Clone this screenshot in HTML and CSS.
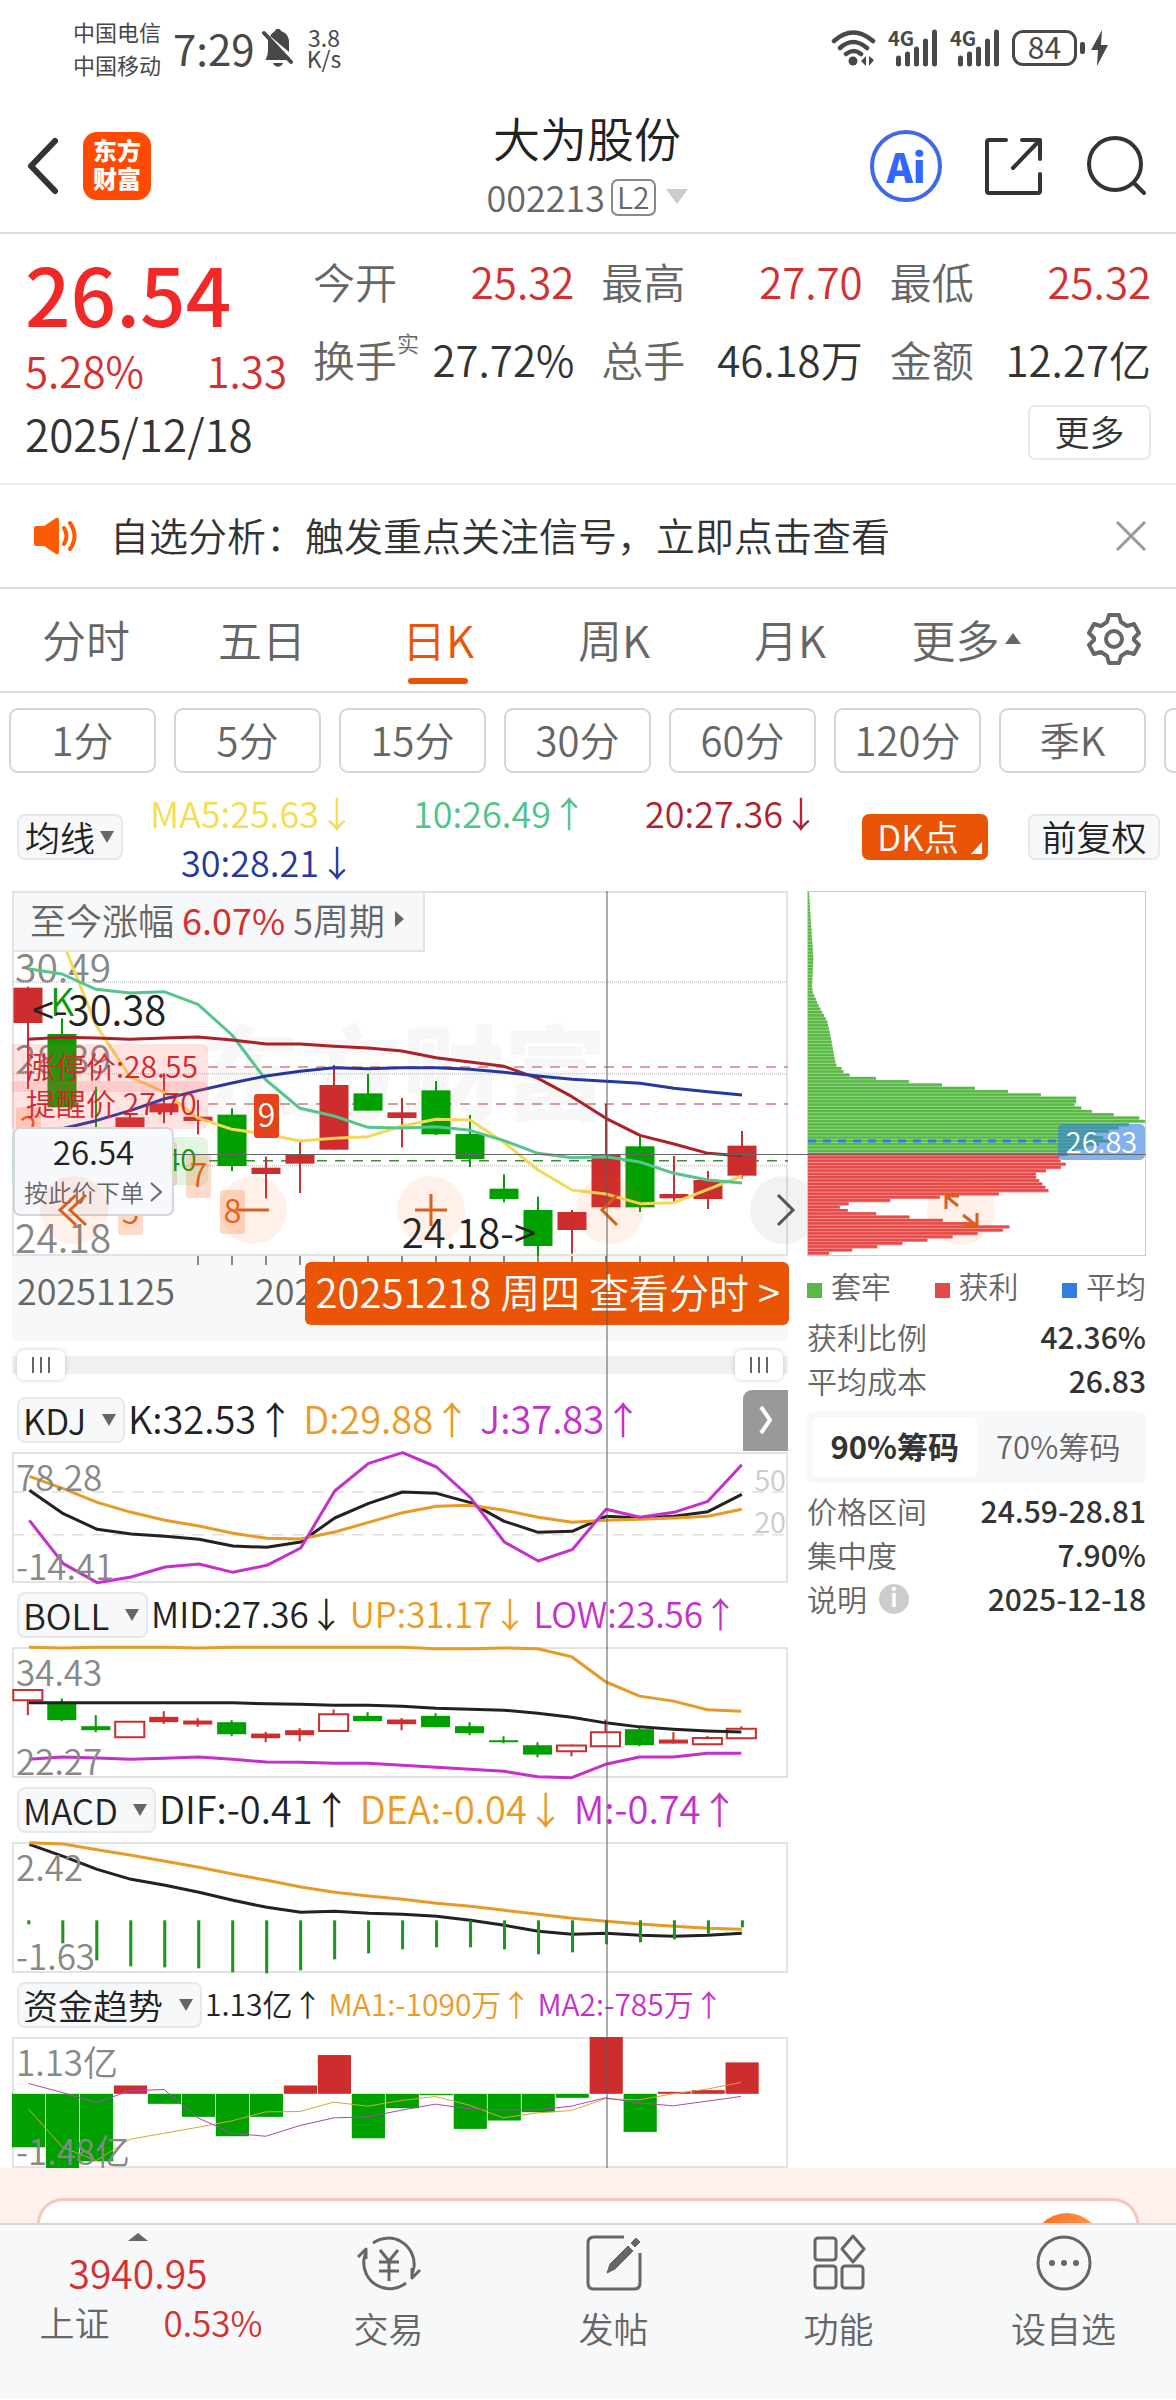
FILE: index.html
```
<!DOCTYPE html>
<html lang="zh-CN">
<head>
    <meta charset="UTF-8">
    <meta name="viewport" content="width=device-width, initial-scale=1.0">
    <title>大为股份 002213</title>
    <link rel="stylesheet" href="styles.css">
</head>
<body>

<div class="status-bar">
    <div class="carriers"><span>中国电信</span><span>中国移动</span></div>
    <span class="clock">7:29</span>
    <svg class="mute" viewBox="0 0 32 40"><path d="M5 31c1-3 2-5 2-9V10l22 20v2H4zM9 8c2-3 4-4 5-5 1-3 5-3 6 0 5 2 8 5 8 11v10zM12 35h10c-2 5-8 5-10 0z" fill="#484848"/><path d="M3 5l27 29" stroke="#484848" stroke-width="4" stroke-linecap="round"/></svg>
    <div class="speed"><span>3.8</span><span>K/s</span></div>
    <div class="signals">
        <svg class="wifi" viewBox="0 0 46 40" fill="none" stroke="#484848" stroke-width="4.5" stroke-linecap="round"><path d="M3 13q19-17 39 0M9 20q13-12 27 0M15 26q8-6 15 0"/><circle cx="22" cy="33" r="4.5" fill="#484848" stroke="none"/><path d="M35 28v10l-5-5zM38 28v10l5-6z" fill="#484848" stroke="none"/></svg>
        <div class="signal"><span>4G</span><svg viewBox="0 0 50 38" stroke="#484848" stroke-width="5" stroke-linecap="round"><path d="M10 29v6M19 25v10M28 20v15M37 12v23M46 3v32"/></svg></div>
        <div class="signal"><span>4G</span><svg viewBox="0 0 50 38" stroke="#484848" stroke-width="5" stroke-linecap="round"><path d="M10 29v6M19 25v10M28 20v15M37 12v23M46 3v32"/></svg></div>
        <div class="battery">84</div>
        <svg class="bolt" viewBox="0 0 28 36" fill="#484848"><rect x="0" y="12" width="5" height="12" rx="2"/><path d="M22 0L11 20h7l-1 16 11-21h-7z"/></svg>
    </div>
</div>

<header class="header">
    <div class="header-left">
        <button class="icon-btn" aria-label="返回"><svg width="34" height="58" viewBox="0 0 34 58" fill="none" stroke="#333" stroke-width="6" stroke-linecap="round" stroke-linejoin="round"><path d="M29 4L5 29l24 25"/></svg></button>
        <div class="logo">东方<br>财富</div>
    </div>
    <div class="header-title">
        <h1>大为股份</h1>
        <div class="code">002213<span class="level">L2</span><i class="caret"></i></div>
    </div>
    <div class="header-right">
        <button class="ai" aria-label="Ai"><span>Ai</span></button>
        <button class="icon-btn" aria-label="分享"><svg width="60" height="60" viewBox="0 0 60 60" fill="none" stroke="#333" stroke-width="4" stroke-linecap="round" stroke-linejoin="round"><path d="M22 4H5q-2 0-2 2v49q0 2 2 2h49q2 0 2-2V38M56 23V4H38M55 5L29 32"/></svg></button>
        <button class="icon-btn" aria-label="搜索"><svg width="62" height="62" viewBox="0 0 62 62" fill="none" stroke="#333" stroke-width="4" stroke-linecap="round"><circle cx="29" cy="29" r="26"/><path d="M48 48l10 10"/></svg></button>
    </div>
</header>

<section class="quote">
    <div class="quote-top">
        <div>
            <div class="price">26.54</div>
            <div class="change"><span>5.28%</span><span>1.33</span></div>
        </div>
        <dl class="stats">
            <div><dt>今开</dt><dd class="up">25.32</dd></div>
            <div><dt>最高</dt><dd class="up">27.70</dd></div>
            <div><dt>最低</dt><dd class="up">25.32</dd></div>
            <div><dt>换手<sup>实</sup></dt><dd>27.72%</dd></div>
            <div><dt>总手</dt><dd>46.18万</dd></div>
            <div><dt>金额</dt><dd>12.27亿</dd></div>
        </dl>
    </div>
    <div class="quote-bottom">
        <span>2025/12/18</span>
        <button class="more">更多</button>
    </div>
</section>

<div class="notice">
    <svg width="46" height="38" viewBox="0 0 46 38"><path d="M1 11q0-2 2-2h8L23 1q3-1 3 2v32q0 3-3 2l-12-8H3q-2 0-2-2z" fill="#ff5a00"/><path d="M31 11q5 8 0 16M37 6q9 13 0 26" fill="none" stroke="#ff5a00" stroke-width="4" stroke-linecap="round"/></svg>
    <p>自选分析：触发重点关注信号，立即点击查看</p>
    <button class="icon-btn" aria-label="关闭"><svg width="30" height="30" viewBox="0 0 30 30" stroke="#999" stroke-width="3"><path d="M1 1l28 28M29 1L1 29"/></svg></button>
</div>

<nav class="tabs">
    <button>分时</button>
    <button>五日</button>
    <button class="active">日K</button>
    <button>周K</button>
    <button>月K</button>
    <button>更多<i class="caret-up"></i></button>
    <button class="gear" aria-label="设置"><svg width="54" height="54" viewBox="0 0 54 54" fill="none" stroke="#666" stroke-width="4" stroke-linejoin="round"><path d="M22 3h10l2 7 6 4 7-2 5 9-5 5v2l5 5-5 9-7-2-6 4-2 7H22l-2-7-6-4-7 2-5-9 5-5v-2l-5-5 5-9 7 2 6-4z"/><circle cx="27" cy="27" r="8"/></svg></button>
</nav>

<div class="periods">
    <button>1分</button>
    <button>5分</button>
    <button>15分</button>
    <button>30分</button>
    <button>60分</button>
    <button>120分</button>
    <button>季K</button>
    <button aria-label="年K"></button>
</div>

<div class="averages">
    <div class="picker tight"><select aria-label="均线"><option>均线</option></select></div>
    <div class="ma-values">
        <span class="ma5">MA5:25.63↓</span>
        <span class="ma10">10:26.49↑</span>
        <span class="ma20">20:27.36↓</span>
        <span class="ma30">30:28.21↓</span>
    </div>
    <button class="dk">DK点</button>
    <button class="adjust">前复权</button>
</div>

<main class="charts">
    <div class="left-col">
        <div class="kline">
            <div class="watermark">东方财富</div>
            <span class="scale s1">30.49</span>
            <span class="scale s2">28.39</span>
            <span class="scale s3">24.18</span>
            <svg id="kline" class="plot" viewBox="36 33 2328 1095" preserveAspectRatio="none"></svg>
            <span class="mark-k">K</span>
            <span class="extreme high">&lt;-30.38</span>
            <span class="extreme low">24.18-&gt;</span>
            <span class="seq n2">2</span>
            <span class="seq n5">5</span>
            <span class="seq n6">6</span>
            <span class="alert limit">涨停价:28.55</span>
            <span class="alert remind">提醒价 27.70</span>
            <span class="alert floor">提醒价 26.40</span>
            <span class="seq n7">7</span>
            <span class="seq n8">8</span>
            <span class="seq n9">9</span>
            <button class="gain">至今涨幅 <b>6.07%</b> 5周期<i></i></button>
            <button class="order"><strong>26.54</strong><span>按此价下单<svg width="14" height="22" viewBox="0 0 14 22" fill="none" stroke="#666" stroke-width="2"><path d="M2 2l10 9-10 9"/></svg></span></button>
            <button class="round r1" aria-label="最左"><svg viewBox="0 0 68 68"><path d="M36 19L20 34l16 15M46 19L30 34l16 15"/></svg></button>
            <button class="round r2" aria-label="缩小"><svg viewBox="0 0 68 68"><path d="M18 34h32"/></svg></button>
            <button class="round r3" aria-label="放大"><svg viewBox="0 0 68 68"><path d="M18 34h32M34 18v32"/></svg></button>
            <button class="round r4" aria-label="左移"><svg viewBox="0 0 68 68"><path d="M41 19L26 34l15 15"/></svg></button>
            <button class="round r5" aria-label="右移"><svg viewBox="0 0 68 68"><path d="M28 19l15 15-15 15"/></svg></button>
        </div>
        <div class="axis">
            <svg id="ticks" viewBox="0 0 776 10" preserveAspectRatio="none"></svg>
            <span>20251125</span>
            <span class="mid-date">202</span>
            <button class="date-tip">20251218 周四 查看分时 &gt;</button>
        </div>
        <div class="range">
            <input type="range" aria-label="起点" min="0" max="100" value="0">
            <input type="range" aria-label="终点" min="0" max="100" value="100">
        </div>

        <div class="ind-head">
            <div class="picker"><select aria-label="指标一"><option>KDJ</option></select></div>
            <p class="wide"><span>K:32.53↑</span><span class="orange">D:29.88↑</span><span class="purple">J:37.83↑</span></p>
            <button class="next" aria-label="展开"><svg width="14" height="30" viewBox="0 0 14 30" fill="none" stroke="#fff" stroke-width="4"><path d="M2 2l9 13-9 13"/></svg></button>
        </div>
        <div class="panel">
            <svg id="kdj" class="plot" viewBox="24 215 1521 393" preserveAspectRatio="none"></svg>
            <span class="top">78.28</span><span class="bottom">-14.41</span>
            <span class="level50">50</span><span class="level20">20</span>
        </div>

        <div class="ind-head">
            <div class="picker"><select aria-label="指标二"><option>BOLL</option></select></div>
            <p><span>MID:27.36↓</span><span class="orange">UP:31.17↓</span><span class="purple">LOW:23.56↑</span></p>
        </div>
        <div class="panel">
            <svg id="boll" class="plot" viewBox="24 801 1521 392" preserveAspectRatio="none"></svg>
            <span class="top">34.43</span><span class="bottom">22.27</span>
        </div>

        <div class="ind-head">
            <div class="picker"><select aria-label="指标三"><option>MACD</option></select></div>
            <p class="wide"><span>DIF:-0.41↑</span><span class="orange">DEA:-0.04↓</span><span class="purple">M:-0.74↑</span></p>
        </div>
        <div class="panel">
            <svg id="macd" class="plot" viewBox="24 215 1521 393" preserveAspectRatio="none"></svg>
            <span class="top">2.42</span><span class="bottom">-1.63</span>
        </div>

        <div class="ind-head">
            <div class="picker"><select aria-label="指标四"><option>资金趋势</option></select></div>
            <p class="small"><span>1.13亿↑</span><span class="orange">MA1:-1090万↑</span><span class="purple">MA2:-785万↑</span></p>
        </div>
        <div class="panel">
            <svg id="funds" class="plot" viewBox="24 801 1521 392" preserveAspectRatio="none"></svg>
            <span class="top">1.13亿</span><span class="bottom">-1.48亿</span>
        </div>
        <div class="cross-v"></div>
    </div>

    <aside class="chips">
        <div class="chips-plot">
            <svg id="chips" class="plot" viewBox="50 24 1018 752" preserveAspectRatio="none"></svg>
            <span class="cost">26.83</span>
            <button class="round expand" aria-label="展开"><svg viewBox="0 0 68 68"><path d="M19 32V19h13M19 19l12 10M36 38l14 11M50 36v13H36"/></svg></button>
        </div>
        <ul class="legend"><li class="g">套牢</li><li class="r">获利</li><li class="b">平均</li></ul>
        <dl>
            <div><dt>获利比例</dt><dd>42.36%</dd></div>
            <div><dt>平均成本</dt><dd>26.83</dd></div>
        </dl>
        <div class="segment"><button class="active">90%筹码</button><button>70%筹码</button></div>
        <dl>
            <div><dt>价格区间</dt><dd>24.59-28.81</dd></div>
            <div><dt>集中度</dt><dd>7.90%</dd></div>
            <div><dt>说明<i class="info">i</i></dt><dd>2025-12-18</dd></div>
        </dl>
    </aside>
    <div class="cross-h"></div>
</main>

<div class="promo"><div class="promo-card"><i></i></div></div>

<footer class="toolbar">
    <button class="index">
        <i class="caret-up"></i>
        <span class="up">3940.95</span>
        <span class="index-row"><span>上证</span><span class="up">0.53%</span></span>
    </button>
    <button><svg viewBox="0 0 66 60"><path d="M17 10A26 26 0 0 1 58 34q-1 4-2 7M50 50A26 26 0 0 1 8 26q1-4 2-8M2 24l8-8v10M64 37l-8 8V35"/><path d="M24 17l9 11 9-11M33 28v20M23 29h20M23 38h20"/></svg>交易</button>
    <button><svg viewBox="0 0 66 60"><path d="M43 4H13q-6 0-6 6v40q0 6 6 6h40q6 0 6-6V20"/><path d="M26 40l3-9 18-18 5 5-18 18zM50 10l5-5 4 4-5 5z" fill="#666" stroke-width="1"/></svg>发帖</button>
    <button><svg viewBox="0 0 66 60"><rect x="9" y="5" width="21" height="22" rx="3"/><rect x="9" y="33" width="21" height="22" rx="3"/><rect x="36" y="33" width="21" height="22" rx="3"/><path d="M47 3l11 13-11 13-11-13z"/></svg>功能</button>
    <button><svg viewBox="0 0 66 60"><circle cx="33" cy="30" r="26"/><g fill="#666" stroke="none"><circle cx="21" cy="30" r="3"/><circle cx="33" cy="30" r="3"/><circle cx="45" cy="30" r="3"/></g></svg>设自选</button>
</footer>

<script src="charts.js"></script>
</body>
</html>
```

FILE: styles.css
```
* {
    box-sizing: border-box;
}
body {
    margin: 0;
    background: #fff;
    color: #333;
    font-family: "Noto Sans CJK SC", Roboto, sans-serif;
    font-weight: 350;
    font-size: 38px;
    line-height: 1;
}
button, select {
    font: inherit;
    color: inherit;
    border: 0;
    background: none;
    padding: 0;
    margin: 0;
}
h1, p, dl, dd, ul {
    margin: 0;
    padding: 0;
    font-weight: inherit;
}
svg {
    display: block;
}
i {
    font-style: normal;
}
.up {
    color: #d5302f;
}
.orange {
    color: #ec9a26;
}
.purple {
    color: #c52fcb;
}
.icon-btn {
    display: flex;
}

/* status bar */
.status-bar {
    display: flex;
    align-items: center;
    height: 98px;
    padding: 0 68px 2px 73px;
    color: #484848;
    font-weight: 400;
}
.carriers {
    display: flex;
    flex-direction: column;
    font-size: 22px;
    line-height: 33px;
    margin-right: 12px;
}
.clock {
    font-size: 42px;
    margin-right: 6px;
}
.mute {
    width: 32px;
    height: 40px;
    margin-right: 14px;
}
.speed {
    display: flex;
    flex-direction: column;
    align-items: center;
    font-size: 23px;
    line-height: 21px;
}
.signals {
    display: flex;
    align-items: center;
    gap: 11px;
    margin-left: auto;
}
.wifi {
    width: 46px;
    height: 40px;
}
.signal {
    display: grid;
}
.signal span, .signal svg {
    grid-area: 1 / 1;
}
.signal span {
    font-size: 20px;
    line-height: 18px;
    font-weight: 700;
}
.signal svg {
    width: 51px;
    height: 38px;
}
.battery {
    width: 65px;
    height: 36px;
    margin-right: -8px;
    border: 3px solid #484848;
    border-radius: 11px;
    text-align: center;
    font-size: 30px;
    line-height: 27px;
}
.bolt {
    width: 28px;
    height: 36px;
}

/* title bar */
.header {
    display: grid;
    grid-template-columns: 1fr auto 1fr;
    align-items: center;
    height: 136px;
    padding: 2px 28px 0 26px;
    border-bottom: 2px solid #ddd;
}
.header-left, .header-right {
    display: flex;
    align-items: center;
}
.header-left {
    gap: 23px;
}
.header-right {
    justify-content: flex-end;
    gap: 42px;
}
.logo {
    width: 68px;
    height: 68px;
    padding-top: 4px;
    border-radius: 14px;
    background: #ff4a00;
    color: #fff;
    font-size: 24px;
    font-weight: 900;
    line-height: 28px;
    text-align: center;
}
.header-title {
    text-align: center;
}
.header-title h1 {
    font-size: 47px;
    line-height: 60px;
    color: #222;
}
.code {
    display: flex;
    align-items: center;
    justify-content: center;
    height: 58px;
    font-size: 36px;
    color: #666;
}
.level {
    margin: 2px 10px 0 6px;
    height: 37px;
    padding: 0 4px;
    border: 2px solid #888;
    border-radius: 7px;
    font-size: 30px;
    line-height: 30px;
}
.caret {
    border: 11px solid transparent;
    border-top: 15px solid #ccc;
    border-bottom: 0;
}
.ai {
    width: 72px;
    height: 72px;
    border: 4px solid #4068e8;
    border-radius: 50%;
    color: #3366ff;
    font-size: 40px;
    font-weight: 900;
    line-height: 50px;
}

/* quote */
.quote {
    padding: 10px 25px 23px;
    border-bottom: 2px solid #eee;
}
.quote-top {
    display: grid;
    grid-template-columns: 262px 1fr;
    gap: 26px;
    height: 156px;
}
.price {
    color: #f02828;
    font-size: 80px;
    font-weight: 500;
    line-height: 96px;
}
.change {
    display: flex;
    justify-content: space-between;
    color: #d5302f;
    font-size: 42px;
    line-height: 60px;
}
.stats {
    display: grid;
    grid-template-columns: 1fr 1fr 1fr;
    column-gap: 27px;
    font-size: 42px;
    line-height: 74px;
}
.stats div {
    display: flex;
    justify-content: space-between;
    height: 74px;
    white-space: nowrap;
}
.stats dt {
    display: flex;
    color: #666;
}
.stats sup {
    font-size: 22px;
    line-height: 40px;
}
.quote-bottom {
    display: flex;
    align-items: center;
    justify-content: space-between;
    margin-top: 5px;
    font-size: 44px;
}
.more {
    width: 123px;
    height: 55px;
    padding-bottom: 5px;
    border: 2px solid #e8e8e8;
    border-radius: 7px;
    font-size: 35px;
}

/* notice */
.notice {
    display: flex;
    align-items: center;
    height: 104px;
    padding: 0 30px 0 33px;
    border-bottom: 2px solid #ddd;
}
.notice p {
    flex: 1;
    margin-left: 31px;
    padding-bottom: 4px;
    font-size: 39px;
}

/* tabs */
.tabs {
    display: grid;
    grid-template-columns: repeat(6, 176fr) 120fr;
    height: 104px;
    border-bottom: 2px solid #ddd;
    color: #666;
    font-size: 44px;
}
.tabs button {
    display: flex;
    align-items: center;
    justify-content: center;
    padding: 0 4px 3px 0;
}
.tabs .active {
    position: relative;
    color: #e95504;
}
.tabs .active::after {
    content: "";
    position: absolute;
    bottom: 7px;
    width: 60px;
    height: 6px;
    border-radius: 3px;
    background: #e95504;
}
.caret-up {
    margin-left: 5px;
    border: 8px solid transparent;
    border-top: 0;
    border-bottom: 11px solid #666;
}
.periods {
    display: flex;
    gap: 18px;
    padding: 15px 0 0 9px;
    overflow: hidden;
    color: #666;
    font-size: 40px;
}
.periods button {
    flex: 0 0 147px;
    height: 65px;
    padding-bottom: 4px;
    border: 2px solid #d5d5d5;
    border-radius: 9px;
}

/* moving averages */
.averages {
    display: flex;
    align-items: center;
    padding: 15px 16px 5px 17px;
}
.picker {
    position: relative;
    color: #222;
    font-size: 35px;
}
.picker select {
    appearance: none;
    display: block;
    height: 46px;
    padding: 0 36px 2px 4px;
    border: 2px solid #e6e8eb;
    border-radius: 8px;
    background: #f7f8fa;
}
.picker::after {
    content: "";
    position: absolute;
    right: 9px;
    top: 17px;
    border: 7px solid transparent;
    border-top: 12px solid #666;
    border-bottom: 0;
    pointer-events: none;
}
.tight select {
    padding: 0 25px 2px 6px;
}
.ma-values {
    flex: 1;
    display: grid;
    grid-template-columns: 1fr 1fr 1fr;
    text-align: right;
    font-size: 36px;
    line-height: 49px;
}
.ma5 {
    color: #f6dc50;
}
.ma10 {
    color: #4fc48a;
}
.ma20 {
    color: #b01f2c;
}
.ma30 {
    color: #2438a0;
}
.dk, .adjust {
    height: 46px;
    padding-bottom: 4px;
    border-radius: 7px;
    font-size: 35px;
}
.dk {
    position: relative;
    width: 126px;
    margin: 0 40px 0 43px;
    padding-right: 14px;
    background: #e95504;
    color: #fff;
}
.dk::after {
    content: "";
    position: absolute;
    right: 6px;
    bottom: 6px;
    border-left: 11px solid transparent;
    border-bottom: 12px solid #fff;
}
.adjust {
    width: 132px;
    border: 2px solid #e6e8eb;
    background: #f7f8fa;
    color: #222;
}

/* charts */
.charts {
    position: relative;
    display: grid;
    grid-template-columns: minmax(0, 776fr) minmax(0, 339fr);
    gap: 19px;
    padding: 0 30px 0 12px;
}
.left-col {
    position: relative;
}
.plot {
    position: absolute;
    inset: 0;
    width: 100%;
    height: 100%;
    overflow: visible;
}
.kline, .panel {
    position: relative;
    box-shadow: inset 0 0 0 2px #e3e3e3;
}
.kline {
    height: 365px;
}
.kline > span, .kline > button {
    position: absolute;
}
.watermark {
    position: absolute;
    left: 24%;
    top: 126px;
    color: #f7f7f7;
    font-size: 102px;
    font-weight: 900;
}
.scale {
    left: 3px;
    color: #888;
    font-size: 39px;
}
.s1 {
    top: 56px;
}
.s2 {
    top: 147px;
}
.s3 {
    top: 326px;
}
.mark-k {
    left: 38px;
    top: 90px;
    color: #0a9a0a;
}
.extreme {
    color: #222;
    font-size: 40px;
}
.high {
    left: 20px;
    top: 97px;
}
.low {
    right: 252px;
    top: 320px;
}
.seq {
    width: 25px;
    height: 44px;
    border-radius: 3px;
    background: rgba(250, 110, 40, .25);
    color: #e0601c;
    font-size: 32px;
    line-height: 38px;
    text-align: center;
}
.n2 {
    left: 4px;
    top: 216px;
}
.n5 {
    left: 106px;
    top: 300px;
}
.n6 {
    left: 140px;
    top: 251px;
}
.n7 {
    left: 174px;
    top: 263px;
}
.n8 {
    left: 208px;
    top: 299px;
}
.n9 {
    left: 242px;
    top: 203px;
    background: #e2431a;
    color: #fff;
}
.alert {
    left: 0;
    width: 196px;
    height: 48px;
    padding-left: 14px;
    border-radius: 0 6px 6px 0;
    background: rgba(255, 80, 80, .16);
    color: #d8262c;
    font-size: 30px;
    line-height: 42px;
    white-space: nowrap;
}
.limit {
    top: 153px;
}
.remind {
    top: 190px;
}
.floor {
    top: 246px;
    background: rgba(60, 180, 60, .15);
    color: #0a9a0a;
}
.gain {
    display: flex;
    align-items: center;
    left: 0;
    top: 0;
    width: 413px;
    height: 61px;
    padding: 0 0 5px 16px;
    border: 2px solid #e3e3e3;
    background: #f7f8fa;
    color: #666;
    font-size: 36px;
    white-space: pre;
}
.gain b {
    color: #d5302f;
    font-weight: 400;
}
.gain i {
    margin-left: 10px;
    border: 8px solid transparent;
    border-left: 9px solid #666;
    border-right: 0;
}
.order {
    display: flex;
    flex-direction: column;
    align-items: center;
    left: 1px;
    top: 236px;
    width: 161px;
    height: 89px;
    border: 2px solid #d3d6da;
    border-radius: 7px;
    background: #f6f8fb;
    color: #666;
    font-size: 24px;
    line-height: 38px;
}
.order strong {
    color: #222;
    font-size: 33px;
    font-weight: 350;
    line-height: 44px;
}
.order span {
    display: flex;
    align-items: center;
    gap: 5px;
    white-space: nowrap;
}
.round {
    position: absolute;
    top: 285px;
    width: 68px;
    height: 68px;
    margin-left: -34px;
    border-radius: 50%;
    background: rgba(255, 90, 20, .09);
}
.round svg {
    fill: none;
    stroke: #d8601c;
    stroke-width: 3;
}
.r1 {
    left: 8%;
}
.r2 {
    left: 31%;
}
.r3 {
    left: 54%;
}
.r4 {
    left: 77%;
}
.r5 {
    left: 99%;
    margin-left: -30px;
    background: rgba(0, 0, 0, .05);
}
.r5 svg {
    stroke: #555;
}
.axis {
    position: relative;
    height: 85px;
    padding: 15px 5px;
    background: #f7f8fa;
    color: #666;
    font-size: 36px;
}
.axis svg {
    position: absolute;
    left: 0;
    top: 0;
    width: 100%;
    height: 10px;
}
.mid-date {
    position: absolute;
    left: 243px;
}
.date-tip {
    position: absolute;
    right: -1px;
    top: 6px;
    height: 63px;
    padding: 0 9px 6px 11px;
    border-radius: 6px;
    background: #e95504;
    color: #fff;
    font-size: 40px;
    white-space: nowrap;
}
.range {
    display: grid;
    align-items: center;
    height: 30px;
    margin: 9px 0 8px;
    padding: 0 5px;
    background: linear-gradient(#f1f1f3, #f1f1f3) center / 100% 18px no-repeat;
}
.range input {
    grid-area: 1 / 1;
    appearance: none;
    width: 100%;
    height: 30px;
    margin: 0;
    background: none;
    pointer-events: none;
}
.range input::-webkit-slider-thumb {
    appearance: none;
    width: 48px;
    height: 30px;
    border-radius: 7px;
    background:
        linear-gradient(#666, #666) 15px 7px / 2px 16px no-repeat,
        linear-gradient(#666, #666) 23px 7px / 2px 16px no-repeat,
        linear-gradient(#666, #666) 31px 7px / 2px 16px no-repeat,
        #fff;
    box-shadow: 0 0 5px rgba(0, 0, 0, .2);
    pointer-events: auto;
}

/* indicators */
.ind-head {
    display: flex;
    align-items: center;
    height: 64px;
    padding-left: 5px;
}
.ind-head p {
    flex: 1;
    display: flex;
    gap: 6px;
    margin-left: 3px;
    padding-bottom: 5px;
    color: #222;
    font-size: 35px;
    white-space: nowrap;
}
.ind-head .wide {
    gap: 9px;
    font-size: 38px;
}
.ind-head .small {
    font-size: 30px;
}
.next {
    display: flex;
    align-items: center;
    justify-content: center;
    width: 45px;
    height: 61px;
    border-radius: 9px 0 0 0;
    background: #999;
}
.panel {
    height: 131px;
}
.panel span {
    position: absolute;
    left: 4px;
    color: #888;
    font-size: 35px;
}
.panel .top {
    top: 6px;
}
.panel .bottom {
    bottom: 1px;
}
.panel .level50, .panel .level20 {
    left: auto;
    right: 2px;
    color: #ccc;
    font-size: 29px;
}
.panel .level50 {
    top: 12px;
}
.panel .level20 {
    top: 54px;
}
.cross-v {
    position: absolute;
    left: 76.5%;
    top: 0;
    bottom: 0;
    width: 2px;
    background: rgba(90, 90, 90, .5);
}
.cross-h {
    position: absolute;
    left: 173px;
    right: 30px;
    top: 263px;
    height: 1px;
    background: #666;
}

/* chip distribution */
.chips-plot {
    position: relative;
    height: 365px;
    border: 1px solid #ccc;
}
.cost {
    position: absolute;
    right: 0;
    top: 232px;
    width: 87px;
    height: 36px;
    border-radius: 5px;
    background: rgba(50, 125, 225, .6);
    color: #fff;
    font-size: 29px;
    line-height: 32px;
    text-align: center;
}
.expand {
    left: 45.5%;
    top: 285px;
}
.legend {
    display: flex;
    justify-content: space-between;
    list-style: none;
    color: #666;
    font-size: 30px;
    line-height: 58px;
}
.legend li::before {
    content: "";
    display: inline-block;
    width: 15px;
    height: 15px;
    margin-right: 9px;
}
.g::before {
    background: #5ab946;
}
.r::before {
    background: #e54a4a;
}
.b::before {
    background: #327de1;
}
.chips dl {
    font-size: 30px;
    line-height: 44px;
}
.chips dl div {
    display: flex;
    justify-content: space-between;
}
.chips dt {
    display: flex;
    align-items: center;
    color: #666;
}
.chips dd {
    font-weight: 500;
}
.info {
    width: 30px;
    height: 30px;
    margin: 2px 0 0 12px;
    border-radius: 50%;
    background: #ccc;
    color: #fff;
    font-size: 24px;
    font-weight: 700;
    line-height: 26px;
    text-align: center;
}
.segment {
    display: grid;
    grid-template-columns: 1fr 1fr;
    height: 72px;
    margin: 9px 0 5px;
    padding: 6px;
    border-radius: 6px;
    background: #f7f8fa;
    color: #666;
    font-size: 31px;
}
.segment button {
    padding-bottom: 4px;
}
.segment .active {
    border-radius: 6px;
    background: #fff;
    color: #333;
    font-weight: 700;
}

/* bottom */
.promo {
    height: 55px;
    padding: 30px 37px 0;
    overflow: hidden;
    background: #fff2ee;
}
.promo-card {
    height: 120px;
    padding: 12px 34px;
    border: 3px solid #f4c6be;
    border-radius: 26px;
    background: #fff;
}
.promo-card i {
    display: block;
    width: 70px;
    height: 70px;
    margin-left: auto;
    border-radius: 50%;
    background: linear-gradient(90deg, #f96a1c, #ff9a4a);
}
.toolbar {
    display: grid;
    grid-template-columns: 276fr repeat(4, 225fr);
    height: 176px;
    border-top: 2px solid #d5d7da;
    background: #f7f8fa;
    color: #666;
    font-size: 35px;
}
.toolbar button {
    display: flex;
    flex-direction: column;
    align-items: center;
    padding-top: 8px;
}
.toolbar svg {
    width: 66px;
    height: 60px;
    margin-bottom: 17px;
    fill: none;
    stroke: #666;
    stroke-width: 3;
    stroke-linejoin: round;
}
.toolbar .caret-up {
    margin: 0 0 12px;
    border-width: 0 10px 8px;
}
.toolbar .index > .up {
    font-size: 39px;
}
.index-row {
    display: flex;
    gap: 54px;
    margin-top: 12px;
    padding-left: 26px;
}
```

FILE: charts.js
```
const NS = 'http://www.w3.org/2000/svg';
const RED = '#cd2d2d';
const GREEN = '#00a000';

function add(svg, tag, attrs) {
    const el = document.createElementNS(NS, tag);
    for (const key in attrs) el.setAttribute(key, attrs[key]);
    svg.appendChild(el);
}

function rect(svg, x, y, width, height, fill, stroke) {
    add(svg, 'rect', { x, y, width, height, fill, stroke: stroke || 'none', 'stroke-width': 2, 'vector-effect': 'non-scaling-stroke' });
}

// values are y positions, one per trading day
function line(svg, x0, step, values, color, width) {
    const points = values.map((y, i) => y === null ? '' : `${x0 + i * step},${y}`).join(' ');
    add(svg, 'polyline', { points, fill: 'none', stroke: color, 'stroke-width': width, 'vector-effect': 'non-scaling-stroke', 'stroke-linejoin': 'round' });
}

function level(svg, x1, x2, y, color, dash) {
    add(svg, 'line', { x1, x2, y1: y, y2: y, stroke: color, 'stroke-width': 1.5, 'stroke-dasharray': dash, 'vector-effect': 'non-scaling-stroke' });
}

// candle: [type, body top, body bottom, wick top, wick bottom]
function candles(svg, x0, step, width, wick, data) {
    data.forEach(([type, top, bottom, high, low], i) => {
        const x = x0 + i * step;
        const color = type === 'g' ? GREEN : RED;
        rect(svg, x - wick / 2, high, wick, low - high, color);
        if (type === 'h') rect(svg, x - width / 2, top, width, bottom - top, '#fff', color);
        else rect(svg, x - width / 2, top, width, bottom - top, color);
    });
}

// daily k line
const kline = document.getElementById('kline');
[307, 581, 857].forEach(y => level(kline, 36, 2364, y, '#ccc', '1 1'));
level(kline, 624, 2364, 561, '#d98080', '10 8');
level(kline, 624, 2364, 672, '#c98080', '10 8');
level(kline, 627, 2364, 842, '#3c8c3c', '10 8');
candles(kline, 84, 102, 87, 6, [
    ['r', 323, 429, 320, 627], ['g', 462, 682, 415, 682], ['g', 800, 850, 620, 870], ['r', 712, 900, 700, 900],
    ['r', 670, 697, 580, 730], ['r', 710, 723, 660, 763], ['g', 704, 858, 685, 873], ['r', 863, 882, 830, 955],
    ['r', 822, 851, 785, 939], ['r', 615, 809, 555, 809], ['g', 640, 692, 582, 692], ['r', 697, 714, 654, 802],
    ['g', 631, 763, 603, 765], ['g', 762, 837, 705, 861], ['g', 926, 957, 883, 967], ['g', 990, 1098, 950, 1131],
    ['r', 996, 1050, 990, 1121], ['r', 822, 982, 672, 982], ['g', 799, 982, 770, 996], ['r', 942, 955, 828, 965],
    ['r', 900, 957, 873, 987], ['r', 797, 887, 753, 896]
]);
line(kline, 84, 102, [null, 180, 435, 590, 636, 714, 748, 762, 783, 775, 770, 738, 718, 720, 787, 870, 930, 942, 971, 968, 928, 888], '#f5d857', 3);
line(kline, 84, 102, [266, 282, 328, 339, 335, 373, 465, 600, 685, 708, 742, 744, 740, 751, 782, 820, 833, 830, 846, 880, 900, 909], '#56c48c', 3);
line(kline, 84, 102, [478, 472, 474, 478, 474, 471, 480, 492, 492, 499, 504, 513, 533, 546, 559, 595, 650, 715, 766, 792, 820, 828], '#ad2029', 3);
line(kline, 84, 102, [null, 746, 722, 692, 657, 632, 609, 588, 574, 563, 566, 563, 563, 568, 577, 588, 598, 604, 610, 625, 635, 645], '#2438a0', 3);

const ticks = document.getElementById('ticks');
for (let i = 5; i < 22; i++) rect(ticks, 15 + i * 34, 0, 2, 9, '#888');

const kdj = document.getElementById('kdj');
level(kdj, 24, 1545, 335, '#ddd', '12 8');
level(kdj, 24, 1545, 463, '#ddd', '12 8');
line(kdj, 58, 66.5, [330, 400, 447, 461, 468, 477, 497, 501, 485, 413, 369, 335, 339, 367, 423, 456, 453, 408, 413, 408, 394, 342], '#222', 3);
line(kdj, 58, 66.5, [288, 325, 366, 396, 420, 437, 459, 474, 476, 455, 426, 397, 378, 375, 390, 411, 426, 420, 417, 413, 408, 387], '#e89a26', 3);
line(kdj, 58, 66.5, [420, 550, 607, 590, 560, 551, 576, 555, 503, 332, 249, 217, 260, 352, 485, 542, 508, 387, 411, 396, 363, 253], '#c52fcb', 3);

const boll = document.getElementById('boll');
candles(boll, 55, 66.6, 57, 4, [
    ['h', 930, 960, 930, 1005], ['g', 967, 1020, 955, 1023], ['g', 1038, 1050, 1005, 1056], ['h', 1025, 1071, 1025, 1071],
    ['r', 1010, 1026, 993, 1031], ['r', 1021, 1033, 1014, 1040], ['g', 1026, 1062, 1020, 1068], ['r', 1060, 1074, 1055, 1086],
    ['r', 1050, 1065, 1044, 1083], ['h', 1002, 1052, 988, 1052], ['g', 1007, 1023, 996, 1023], ['r', 1018, 1032, 1014, 1050],
    ['g', 1007, 1041, 999, 1041], ['g', 1038, 1059, 1026, 1065], ['g', 1080, 1086, 1068, 1089], ['g', 1095, 1123, 1086, 1131],
    ['h', 1096, 1113, 1093, 1128], ['h', 1056, 1098, 1018, 1100], ['g', 1047, 1095, 1040, 1098], ['r', 1078, 1090, 1056, 1090],
    ['h', 1073, 1092, 1067, 1094], ['h', 1046, 1074, 1038, 1077]
]);
line(boll, 57, 66.5, [802, 804, 802, 802, 802, 804, 802, 802, 802, 802, 802, 802, 806, 806, 804, 806, 830, 905, 948, 963, 989, 993], '#e89a26', 3);
line(boll, 57, 66.5, [968, 968, 968, 968, 968, 968, 968, 971, 972, 975, 975, 978, 984, 987, 990, 999, 1011, 1028, 1040, 1047, 1052, 1055], '#222', 3);
line(boll, 57, 66.5, [1137, 1130, 1133, 1137, 1134, 1130, 1137, 1145, 1146, 1149, 1149, 1155, 1161, 1167, 1173, 1189, 1192, 1152, 1130, 1130, 1119, 1119], '#c52fcb', 3);

const macd = document.getElementById('macd');
line(macd, 58, 66.5, [222, 258, 297, 327, 345, 366, 390, 411, 426, 423, 429, 432, 438, 450, 465, 483, 492, 489, 495, 498, 495, 489], '#222', 3);
line(macd, 58, 66.5, [217, 221, 238, 255, 273, 291, 311, 330, 350, 366, 377, 387, 399, 408, 420, 432, 444, 453, 461, 468, 474, 477], '#e89a26', 3);
[462, 519, 570, 588, 591, 594, 606, 609, 600, 567, 549, 537, 531, 531, 537, 552, 546, 522, 516, 507, 490, 471]
    .forEach((y, i) => rect(macd, 54 + i * 66.6, 450, 6, y - 450, '#1c961c'));

const funds = document.getElementById('funds');
[1131, 1193, 1173, 946, 1001, 1040, 1098, 1040, 946, 855, 1104, 1014, 975, 1076, 1051, 1026, 983, 801, 1085, 965, 960, 877]
    .forEach((y, i) => rect(funds, 24 + i * 66.6, Math.min(y, 971), 65, Math.abs(y - 971), y < 971 ? RED : GREEN));
line(funds, 56, 66.5, [1016, 1130, 1171, 1107, 1089, 1071, 1052, 1025, 1024, 996, 1008, 991, 979, 1005, 1043, 1028, 1021, 986, 989, 971, 957, 937], '#dda03c', 1);
line(funds, 56, 66.5, [940, 967, 997, 962, 958, 1043, 1089, 1098, 1066, 1043, 1040, 1020, 1002, 1016, 1019, 1019, 1008, 983, 998, 1007, 993, 979], '#b044b8', 1);

// chip distribution, [y, bar length], filled in between
const shape = [
    [24, 3], [80, 8], [160, 16], [220, 12], [232, 14], [260, 32], [292, 58], [330, 70], [382, 84], [388, 100], [402, 112],
    [409, 190], [444, 700], [451, 810], [458, 810], [464, 803], [471, 823], [478, 853], [485, 920], [492, 1000], [499, 1018],
    [506, 968], [520, 905], [527, 865], [541, 925], [548, 870], [562, 800], [569, 780], [576, 751], [589, 781], [596, 760],
    [603, 708], [610, 682], [644, 728], [651, 533], [658, 355], [664, 230], [671, 104], [678, 94], [685, 126], [692, 228],
    [720, 640], [768, 108], [776, 30]
];
const chips = document.getElementById('chips');
for (let n = 0; n < 110; n++) {
    const y = 24 + n * 6.84;
    const k = Math.max(1, shape.findIndex(p => p[0] >= y + 3));
    const [y0, w0] = shape[k - 1];
    const [y1, w1] = shape[k];
    const w = w0 + (w1 - w0) * (y + 3 - y0) / (y1 - y0);
    const trapped = y < 562;
    rect(chips, 50, y, w, 6.84, trapped ? '#93d485' : '#f58a86');
    rect(chips, 50, y, w, 5, trapped ? '#5ab946' : '#e54a4a');
}
add(chips, 'line', { x1: 50, x2: 806, y1: 540, y2: 540, stroke: '#327de1', 'stroke-width': 3, 'stroke-dasharray': '8 7', 'vector-effect': 'non-scaling-stroke' });
```
